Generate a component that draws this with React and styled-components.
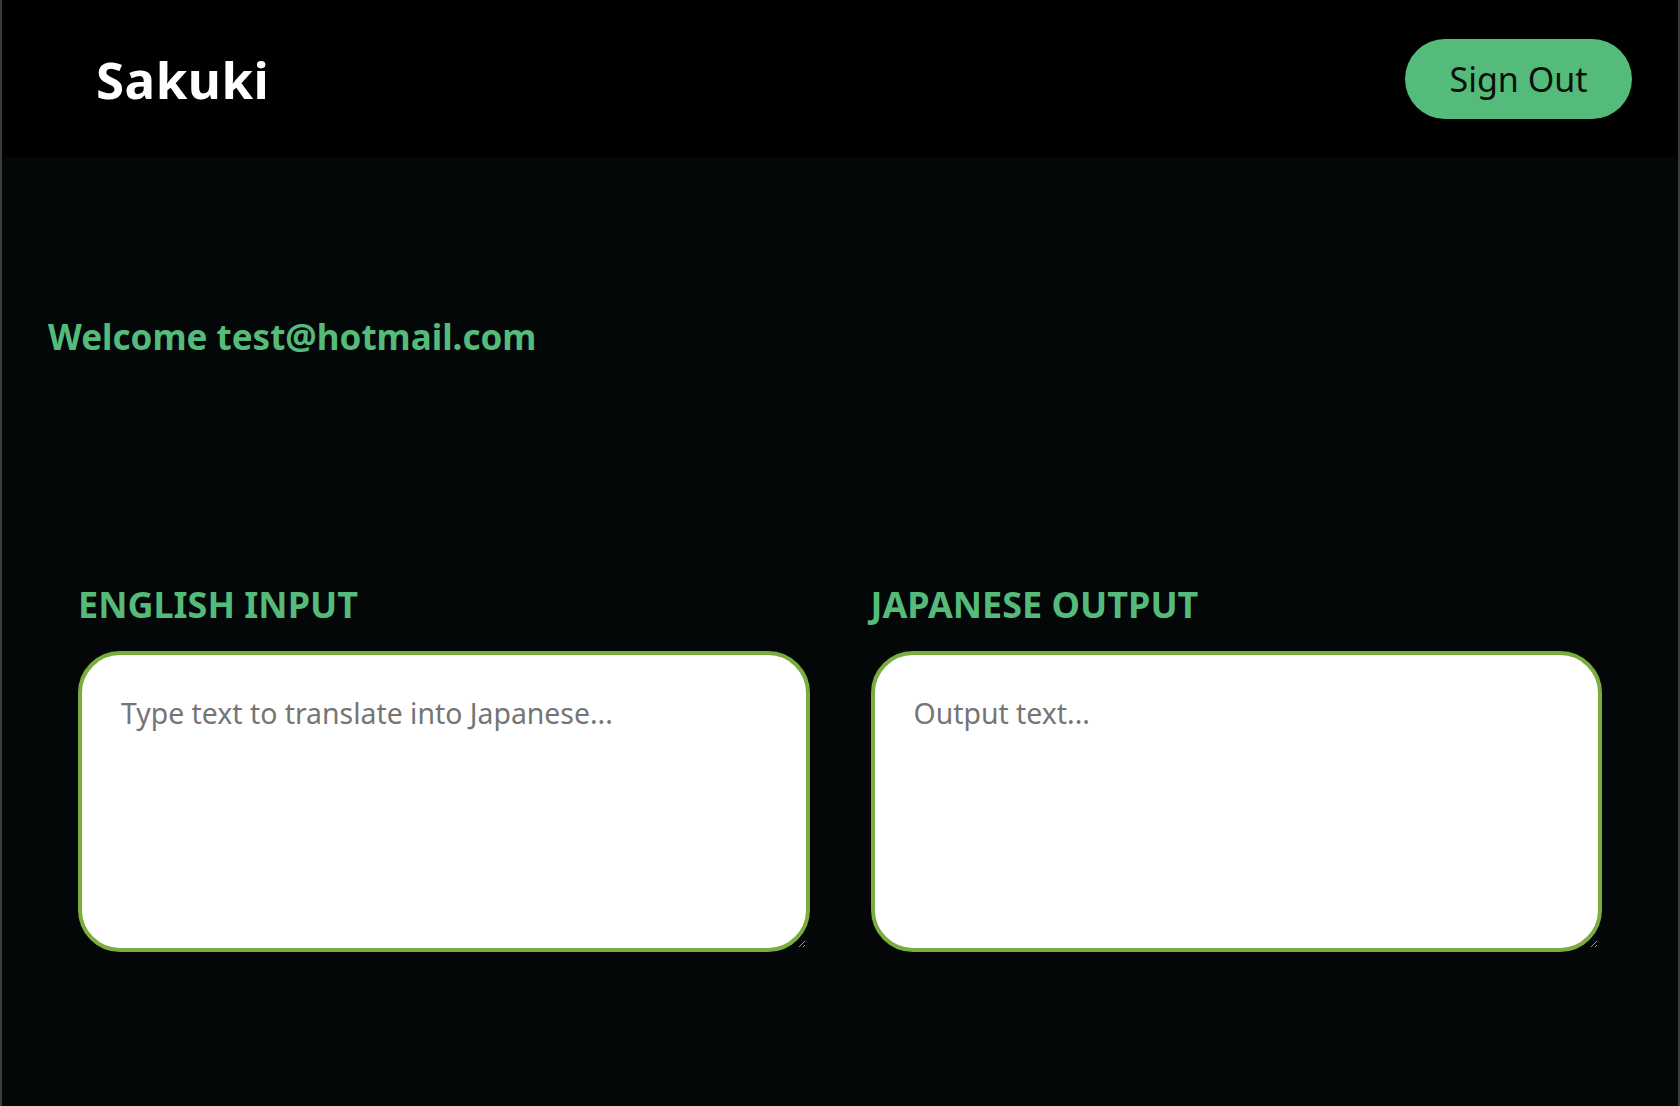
import React from "react";
import styled, { createGlobalStyle } from "styled-components";

const Global = createGlobalStyle`
  html, body { margin: 0; padding: 0; background: #030708; }
  body { font-family: "Noto Sans", "Open Sans", sans-serif; }
  * { box-sizing: border-box; }
`;

const Frame = styled.div`
  min-height: 1106px;
  background: #030708;
  border-left: 2px solid #3c3c3c;
  border-right: 2px solid #3c3c3c;
  display: flex;
  flex-direction: column;
`;

const Header = styled.header`
  height: 157px;
  background: #000;
  display: flex;
  align-items: center;
  justify-content: space-between;
  padding: 0 46px 0 94px;
`;

const Logo = styled.h1`
  margin: 0;
  color: #fff;
  font-size: 51px;
  font-weight: 700;
  letter-spacing: 0.5px;
`;

const SignOut = styled.button`
  width: 227px;
  height: 80px;
  border: none;
  border-radius: 40px;
  background: #55bb7a;
  color: #0a0f0c;
  font-family: inherit;
  font-size: 34px;
  cursor: pointer;
`;

const Main = styled.main`
  padding: 156px 0 0 46px;
`;

const Welcome = styled.h2`
  margin: 0;
  color: #55bb7a;
  font-size: 35px;
  font-weight: 700;
`;

const Panels = styled.section`
  display: grid;
  grid-template-columns: 1fr 1fr;
  gap: 61px;
  padding: 223px 76px 0 76px;
`;

const Panel = styled.div`
  display: flex;
  flex-direction: column;
`;

const Label = styled.label`
  color: #55bb7a;
  font-size: 36px;
  font-weight: 700;
  line-height: 44px;
  margin-bottom: 24px;
`;

const Area = styled.textarea`
  width: 100%;
  height: 301px;
  border: 4px solid #7bac3e;
  border-radius: 42px;
  background: #fff;
  padding: 39px 39px;
  font-family: inherit;
  font-size: 28.4px;
  color: #222;
  outline: none;
  &::placeholder { color: #757575; }
`;

export default function App() {
  return (
    <>
      <Global />
      <Frame>
        <Header>
          <Logo>Sakuki</Logo>
          <SignOut>Sign Out</SignOut>
        </Header>
        <Main>
          <Welcome>Welcome test@hotmail.com</Welcome>
        </Main>
        <Panels>
          <Panel>
            <Label>ENGLISH INPUT</Label>
            <Area placeholder="Type text to translate into Japanese..." />
          </Panel>
          <Panel>
            <Label>JAPANESE OUTPUT</Label>
            <Area placeholder="Output text..." readOnly />
          </Panel>
        </Panels>
      </Frame>
    </>
  );
}
